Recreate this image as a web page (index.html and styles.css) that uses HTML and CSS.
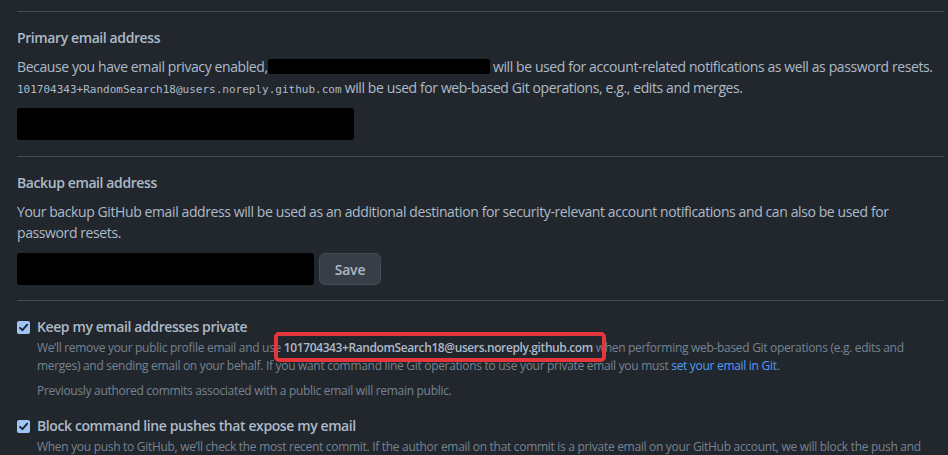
FILE: index.html
```html
<!DOCTYPE html>
<html lang="en">
<head>
<meta charset="utf-8">
<title>Emails</title>
<link rel="stylesheet" href="styles.css">
</head>
<body>
<div class="page">
  <section class="section first">
    <h3 class="heading">Primary email address</h3>
    <p class="text">Because you have email privacy enabled,<span class="redact redact-inline"></span> will be used for account-related notifications as well as password resets. <code class="mono">101704343+RandomSearch18@users.noreply.github.com</code> will be used for web-based Git operations, e.g., edits and merges.</p>
    <div class="field-row">
      <span class="redact redact-field primary"></span>
    </div>
  </section>
  <section class="section">
    <h3 class="heading">Backup email address</h3>
    <p class="text">Your backup GitHub email address will be used as an additional destination for security-relevant account notifications and can also be used for password resets.</p>
    <div class="field-row">
      <span class="redact redact-field backup"></span>
      <button class="btn">Save</button>
    </div>
  </section>
  <section class="section checks">
    <div class="check">
      <div class="check-row">
        <svg class="box" width="13" height="13" viewBox="0 0 13 13"><rect x="0" y="0" width="13" height="13" rx="2" fill="#9ec5f6"/><path d="M3 6.8 L5.4 9.2 L10.2 3.6" fill="none" stroke="#1c2128" stroke-width="1.8" stroke-linecap="round" stroke-linejoin="round"/></svg>
        <span class="label">Keep my email addresses private</span>
      </div>
      <p class="note note-first">We’ll remove your public profile email and use <span class="hl"><strong class="em">101704343+RandomSearch18@users.noreply.github.com</strong></span> when performing web-based Git operations (e.g. edits and merges) and sending email on your behalf. If you want command line Git operations to use your private email you must <a class="link" href="#">set your email in Git</a>.</p>
      <p class="note note-gap">Previously authored commits associated with a public email will remain public.</p>
    </div>
    <div class="check check-gap">
      <div class="check-row">
        <svg class="box" width="13" height="13" viewBox="0 0 13 13"><rect x="0" y="0" width="13" height="13" rx="2" fill="#9ec5f6"/><path d="M3 6.8 L5.4 9.2 L10.2 3.6" fill="none" stroke="#1c2128" stroke-width="1.8" stroke-linecap="round" stroke-linejoin="round"/></svg>
        <span class="label">Block command line pushes that expose my email</span>
      </div>
      <p class="note note-first">When you push to GitHub, we’ll check the most recent commit. If the author email on that commit is a private email on your GitHub account, we will block the push and warn you about exposing your private email.</p>
    </div>
  </section>
</div>
</body>
</html>
```
FILE: styles.css
```css
html, body {
  margin: 0;
  padding: 0;
  background: #22272e;
  height: 100%;
  overflow: hidden;
}
body {
  font-family: "Open Sans", "Noto Sans", sans-serif;
  font-size: 14px;
  letter-spacing: -0.4px;
  color: #adbac7;
}
.page {
  padding: 11px 4px 0 17px;
}
.section {
  border-top: 1px solid #444c56;
  padding: 16px 0 15px;
}
.section.first {
  padding-bottom: 16px;
}
.heading {
  margin: 0 0 8px;
  font-size: 14px;
  line-height: 20px;
  font-weight: 600;
  color: #adbac7;
}
.text {
  margin: 0;
  line-height: 21px;
}
.mono {
  font-family: "DejaVu Sans Mono", "Liberation Mono", monospace;
  font-size: 11px;
  line-height: 1;
  letter-spacing: 0;
}
.redact {
  display: inline-block;
  background: #000;
}
.redact-inline {
  width: 222px;
  height: 15px;
  vertical-align: -2px;
  border-radius: 2px;
}
.field-row {
  display: flex;
  gap: 5px;
  margin-top: 10px;
}
.redact-field {
  height: 32px;
  border-radius: 3px;
}
.primary { width: 337px; }
.backup { width: 297px; }
.btn {
  height: 32px;
  width: 62px;
  background: #373e47;
  border: 1px solid #444c56;
  border-radius: 6px;
  color: #adbac7;
  font-family: inherit;
  font-size: 14px;
  font-weight: 600;
  letter-spacing: -0.2px;
  padding: 0;
}
.checks {
  padding-top: 16px;
}
.check-row {
  display: flex;
  align-items: center;
  gap: 7px;
  height: 20px;
}
.box {
  flex: none;
  display: block;
}
.label {
  font-weight: 600;
  line-height: 20px;
}
.note {
  margin: 0 0 0 20px;
  font-size: 12px;
  line-height: 18px;
  letter-spacing: -0.3px;
  color: #768390;
}
.note-first {
  margin-top: 2px;
}
.note-gap {
  margin-top: 7px;
}
.check-gap {
  margin-top: 16px;
}
.em {
  font-weight: 600;
  color: #adbac7;
  letter-spacing: -0.4px;
}
.hl {
  position: relative;
}
.hl::after {
  content: "";
  position: absolute;
  left: -10px;
  right: -13px;
  top: -7px;
  bottom: -6px;
  border: 4px solid #e5353d;
  border-radius: 5px;
}
.link {
  color: #539bf5;
  text-decoration: none;
}
```
